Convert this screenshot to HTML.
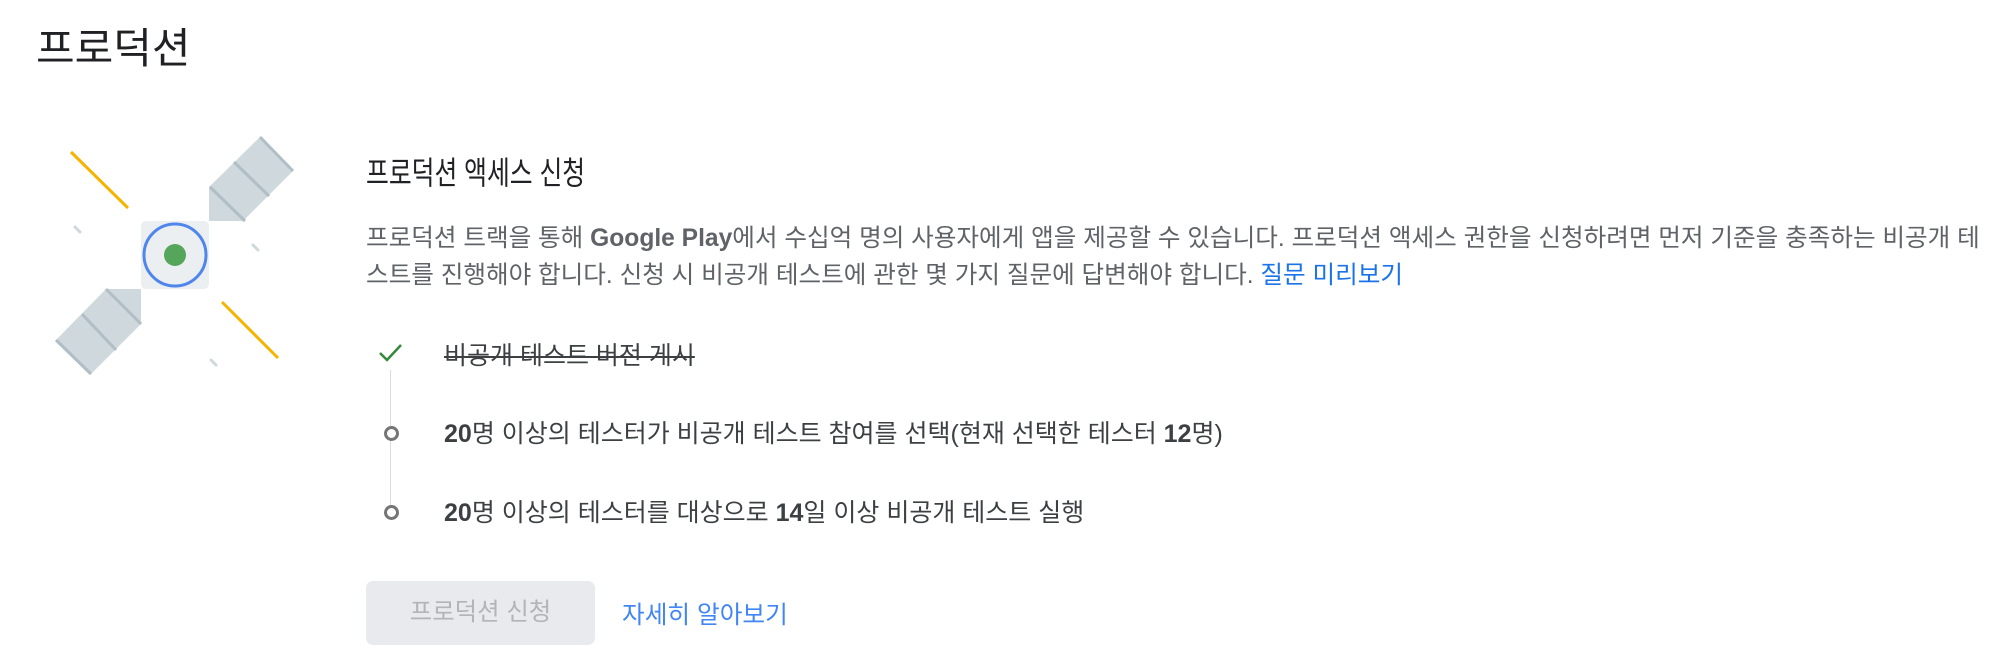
<!DOCTYPE html>
<html><head><meta charset="utf-8"><style>
html,body{margin:0;padding:0;background:#fff;width:2002px;height:660px;overflow:hidden}
body{font-family:"Liberation Sans","Noto Sans CJK KR",sans-serif;position:relative}
.a{position:absolute;white-space:nowrap}
.title{left:36px;top:15px;font-size:42px;color:#202124}
.sub{left:366px;top:148px;font-size:32px;color:#202124;transform:scaleX(0.775);transform-origin:0 0}
.p{left:366px;top:220px;font-size:24.6px;line-height:37px;color:#5f6368}
.p b{font-weight:bold;color:#5f6368}
.lnk{color:#1a73e8}
.it{left:444px;font-size:25px;color:#3c4043}
.it b{font-weight:bold}
.btn{left:366px;top:581px;width:229px;height:64px;background:#e8eaed;border-radius:7px;color:#b1b4b8;font-size:24.4px;line-height:64px;text-align:center}
.dot{position:absolute;width:9px;height:9px;border:3px solid #757575;border-radius:50%;background:#fff}
</style></head><body>
<svg class="a" style="left:0;top:0" width="340" height="420">
<g stroke="#f4b400" stroke-width="3"><line x1="71" y1="152" x2="128" y2="208"/><line x1="222" y1="302" x2="278" y2="358"/></g>
<g stroke="#cfd8dc" stroke-width="3" stroke-linecap="round"><line x1="75" y1="227" x2="80" y2="232"/><line x1="253" y1="245" x2="258" y2="250"/><line x1="211" y1="360" x2="216" y2="365"/></g>
<polygon points="209,187 260,137 293,171 243,221 209,221" fill="#cfd8dc"/>
<g stroke="#b0bec5" stroke-width="3"><line x1="210" y1="187" x2="245" y2="221"/><line x1="234" y1="162" x2="269" y2="196"/><line x1="260" y1="137" x2="293" y2="171"/></g>
<polygon points="141,289 106,289 56,340 91,374 141,324" fill="#cfd8dc"/>
<g stroke="#b0bec5" stroke-width="3"><line x1="106" y1="289" x2="141" y2="324"/><line x1="82" y1="314" x2="116" y2="350"/><line x1="56" y1="340" x2="91" y2="374"/></g>
<rect x="141" y="221" width="68" height="68" rx="5" fill="#eceff1"/>
<circle cx="175" cy="255" r="31" fill="none" stroke="#4f86ec" stroke-width="3"/>
<circle cx="175" cy="255" r="11" fill="#55a55b"/>
</svg>
<div class="a title">프로덕션</div>
<div class="a sub">프로덕션 액세스 신청</div>
<div class="a p">프로덕션 트랙을 통해 <b>Google Play</b>에서 수십억 명의 사용자에게 앱을 제공할 수 있습니다. 프로덕션 액세스 권한을 신청하려면 먼저 기준을 충족하는 비공개 테<br>스트를 진행해야 합니다. 신청 시 비공개 테스트에 관한 몇 가지 질문에 답변해야 합니다. <span class="lnk">질문 미리보기</span></div>
<svg class="a" style="left:378px;top:342px" width="26" height="22"><path d="M2 11 L9 18 L23 3" fill="none" stroke="#34883a" stroke-width="2.5"/></svg>
<div class="a" style="left:390px;top:370px;width:1px;height:141px;background:#dadce0"></div>
<div class="dot" style="left:384px;top:426px"></div>
<div class="dot" style="left:384px;top:505px"></div>
<div class="a it" style="top:336px;color:#3c4043;text-decoration:line-through;text-decoration-thickness:2px">비공개 테스트 버전 게시</div>
<div class="a it" style="top:414px"><b>20</b>명 이상의 테스터가 비공개 테스트 참여를 선택(현재 선택한 테스터 <b>12</b>명)</div>
<div class="a it" style="top:493px"><b>20</b>명 이상의 테스터를 대상으로 <b>14</b>일 이상 비공개 테스트 실행</div>
<div class="a btn">프로덕션 신청</div>
<div class="a lnk" style="left:622px;top:595px;font-size:24.7px;color:#4285f4">자세히 알아보기</div>
</body></html>
